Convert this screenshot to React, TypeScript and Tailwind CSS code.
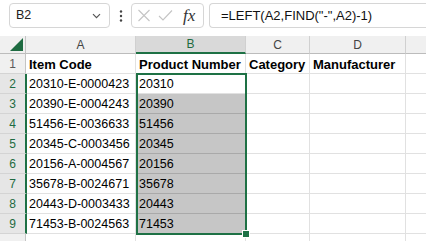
import React from "react";

const rows: [string, string][] = [
  ["20310-E-0000423", "20310"],
  ["20390-E-0004243", "20390"],
  ["51456-E-0036633", "51456"],
  ["20345-C-0003456", "20345"],
  ["20156-A-0004567", "20156"],
  ["35678-B-0024671", "35678"],
  ["20443-D-0003433", "20443"],
  ["71453-B-0024563", "71453"],
];

const font = { fontFamily: '"Liberation Sans", Arial, sans-serif' };

function RowHeader({ n, selected }: { n: string; selected?: boolean }) {
  return (
    <div
      className={
        "w-[26px] shrink-0 flex items-end justify-center border-b border-[#d4d4d4] " +
        (selected
          ? "bg-[#e6e6e6] text-[#1e6b41] border-r-2 border-r-[#1e7145] w-[27px]"
          : "bg-[#f0f0f0] text-[#5a5a5a] border-r border-r-[#c4c4c4]")
      }
    >
      <span className="text-[12px] leading-[15px] pb-[1px]">{n}</span>
    </div>
  );
}

export default function App() {
  return (
    <div className="w-[426px] h-[241px] overflow-hidden bg-white relative" style={font}>
      {/* Formula bar */}
      <div className="h-[36px] flex items-start pt-[3px] bg-white">
        <div className="ml-[9px] w-[101px] h-[25px] rounded-[4px] border border-[#d6d6d6] flex items-center justify-between pl-[6px] pr-[8px]">
          <span className="text-[12.5px] text-[#222]">B2</span>
          <svg width="9" height="6" viewBox="0 0 9 6">
            <path d="M1 1.2 L4.5 4.7 L8 1.2" fill="none" stroke="#555" strokeWidth="1.2" />
          </svg>
        </div>
        <div className="w-[21px] h-[25px] flex items-center justify-center">
          <svg width="4" height="14" viewBox="0 0 4 14">
            <circle cx="2" cy="2.5" r="1.2" fill="#444" />
            <circle cx="2" cy="7" r="1.2" fill="#444" />
            <circle cx="2" cy="11.5" r="1.2" fill="#444" />
          </svg>
        </div>
        <div className="w-[73px] h-[25px] rounded-[4px] border border-[#d6d6d6] flex items-center pl-[5px]">
          <svg width="14" height="13" viewBox="0 0 14 13" className="shrink-0">
            <path d="M1.5 1 L12.5 12 M12.5 1 L1.5 12" fill="none" stroke="#c4c4c4" strokeWidth="1.1" />
          </svg>
          <svg width="15" height="13" viewBox="0 0 15 13" className="ml-[7px] shrink-0">
            <path d="M1 7 L5 11 L14 1.5" fill="none" stroke="#c4c4c4" strokeWidth="1.1" />
          </svg>
          <span
            className="ml-[10px] text-[17px] italic text-[#333] leading-none"
            style={{ fontFamily: '"Liberation Serif", "Times New Roman", serif' }}
          >
            fx
          </span>
        </div>
        <div className="ml-[5px] flex-1 h-[25px] rounded-l-[4px] border border-r-0 border-[#d6d6d6] flex items-center pl-[11px]">
          <span className="text-[13px] text-[#111]">=LEFT(A2,FIND("-",A2)-1)</span>
        </div>
      </div>

      {/* Column headers */}
      <div className="h-[18px] flex">
        <div className="w-[26px] shrink-0 bg-[#f0f0f0] border-r border-[#c4c4c4] border-b border-b-[#bcbcbc] flex items-end justify-end pr-[2px] pb-[2px]">
          <svg width="13" height="13" viewBox="0 0 13 13">
            <path d="M13 0 L13 13 L0 13 Z" fill="#1e6b41" />
          </svg>
        </div>
        <div className="w-[110px] shrink-0 bg-[#f0f0f0] border-r border-[#d0d0d0] border-b border-b-[#bcbcbc] flex items-center justify-center text-[12px] text-[#444]">
          A
        </div>
        <div className="w-[110px] shrink-0 bg-[#d9d9d9] border-r border-[#d0d0d0] border-b-2 border-b-[#1e7145] flex items-center justify-center text-[12px] text-[#1e6b41]">
          B
        </div>
        <div className="w-[64px] shrink-0 bg-[#f0f0f0] border-r border-[#d0d0d0] border-b border-b-[#bcbcbc] flex items-center justify-center text-[12px] text-[#444]">
          C
        </div>
        <div className="w-[96px] shrink-0 bg-[#f0f0f0] border-r border-[#d0d0d0] border-b border-b-[#bcbcbc] flex items-center justify-center text-[12px] text-[#444]">
          D
        </div>
        <div className="flex-1 bg-[#f0f0f0] border-b border-b-[#bcbcbc]" />
      </div>

      {/* Row 1 */}
      <div className="h-[20px] flex">
        <RowHeader n="1" />
        <div className="w-[110px] shrink-0 border-r border-b border-[#e1e1e1] flex items-end pl-[3px] pb-[1px]">
          <span className="text-[13px] leading-[15px] font-bold text-black">Item Code</span>
        </div>
        <div className="w-[110px] shrink-0 border-r border-b border-[#e1e1e1] flex items-end pl-[3px] pb-[1px] whitespace-nowrap">
          <span className="text-[13px] leading-[15px] font-bold text-black">Product Number</span>
        </div>
        <div className="w-[64px] shrink-0 border-r border-b border-[#e1e1e1] flex items-end pl-[3px] pb-[1px]">
          <span className="text-[13px] leading-[15px] font-bold text-black">Category</span>
        </div>
        <div className="w-[96px] shrink-0 border-r border-b border-[#e1e1e1] flex items-end pl-[3px] pb-[1px]">
          <span className="text-[13px] leading-[15px] font-bold text-black">Manufacturer</span>
        </div>
        <div className="flex-1 border-b border-[#e1e1e1]" />
      </div>

      {rows.map(([a, b], i) => (
        <div key={i} className="h-[20px] flex">
          <RowHeader n={String(i + 2)} selected />
          <div className="w-[109px] shrink-0 border-r border-b border-[#e1e1e1] flex items-end pl-[2px] pb-[1px]">
            <span className="text-[12.5px] leading-[15px] text-black">{a}</span>
          </div>
          <div
            className={
              "w-[110px] shrink-0 border-r border-b flex items-end pl-[3px] pb-[1px] " +
              (i === 0 ? "bg-white border-[#e1e1e1]" : "bg-[#c6c6c6] border-b-[#a9a9a9] border-r-[#e1e1e1]")
            }
          >
            <span className="text-[12.5px] leading-[15px] text-black">{b}</span>
          </div>
          <div className="w-[64px] shrink-0 border-r border-b border-[#e1e1e1]" />
          <div className="w-[96px] shrink-0 border-r border-b border-[#e1e1e1]" />
          <div className="flex-1 border-b border-[#e1e1e1]" />
        </div>
      ))}

      {/* Row 10 partial */}
      <div className="h-[20px] flex">
        <div className="w-[26px] shrink-0 bg-[#f0f0f0] border-r border-[#c4c4c4]" />
        <div className="w-[110px] shrink-0 border-r border-[#e1e1e1]" />
        <div className="w-[110px] shrink-0 border-r border-[#e1e1e1]" />
        <div className="w-[64px] shrink-0 border-r border-[#e1e1e1]" />
        <div className="w-[96px] shrink-0 border-r border-[#e1e1e1]" />
        <div className="flex-1" />
      </div>

      {/* Selection overlay */}
      <div className="absolute left-[136px] top-[73px] w-[111px] h-[162px] border-2 border-[#1e7145] pointer-events-none" />
      <div className="absolute left-[242px] top-[230px] w-[8px] h-[8px] bg-[#1e7145] border border-white pointer-events-none" />
    </div>
  );
}
